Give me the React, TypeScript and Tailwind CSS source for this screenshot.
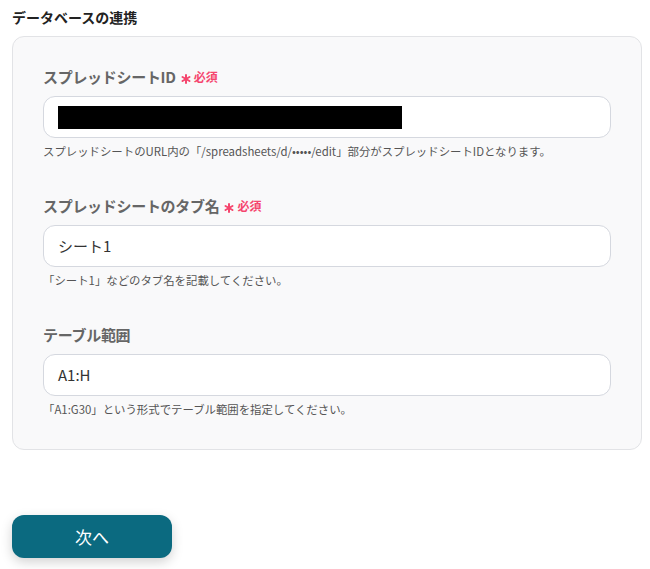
import React from 'react'

interface Field {
  label: string
  required?: boolean
  value?: string
  redacted?: boolean
  help: string
}

const fields: Field[] = [
  {
    label: 'スプレッドシートID',
    required: true,
    redacted: true,
    help: 'スプレッドシートのURL内の「/spreadsheets/d/•••••/edit」部分がスプレッドシートIDとなります。',
  },
  {
    label: 'スプレッドシートのタブ名',
    required: true,
    value: 'シート1',
    help: '「シート1」などのタブ名を記載してください。',
  },
  {
    label: 'テーブル範囲',
    value: 'A1:H',
    help: '「A1:G30」という形式でテーブル範囲を指定してください。',
  },
]

function Asterisk() {
  return (
    <svg width="10" height="10" viewBox="0 0 10 10" className="mt-[4px]">
      <g stroke="#f5466e" strokeWidth="2" strokeLinecap="round">
        <line x1="5" y1="1" x2="5" y2="9" />
        <line x1="1.5" y1="3" x2="8.5" y2="7" />
        <line x1="1.5" y1="7" x2="8.5" y2="3" />
      </g>
    </svg>
  )
}

function FormField({ field }: { field: Field }) {
  return (
    <div className="flex flex-col">
      <div className="flex items-center gap-[5px] h-5">
        <span className="text-[15px] font-bold text-[#666] leading-5 tracking-[-0.3px]">{field.label}</span>
        {field.required && (
          <span className="flex items-center gap-[3px] h-5">
            <Asterisk />
            <span className="text-[12px] font-bold text-[#f5466e] leading-5">必須</span>
          </span>
        )}
      </div>
      <div className="mt-[9px] h-[42px] rounded-xl border border-[#d5d8df] bg-white flex items-center px-[14px]">
        {field.redacted ? (
          <div className="w-[344px] h-[23px] bg-black" />
        ) : (
          <span className="text-[15px] text-[#333] leading-5">{field.value}</span>
        )}
      </div>
      <p className="mt-[5px] h-4 text-[11.4px] text-[#555] leading-4">{field.help}</p>
    </div>
  )
}

export default function App() {
  return (
    <div
      className="min-h-screen bg-white px-3 pt-[7px]"
      style={{ fontFamily: '"Noto Sans CJK JP", "Noto Sans", sans-serif' }}
    >
      <h2 className="h-5 text-sm font-bold text-[#222] leading-5">データベースの連携</h2>

      {/* Settings card */}
      <div className="mt-[9px] w-[630px] rounded-xl border border-[#e2e3e6] bg-[#f9f9fa] pt-[30px] pb-[32px] px-[30px] flex flex-col gap-[37px]">
        {fields.map((f) => (
          <FormField key={f.label} field={f} />
        ))}
      </div>

      <button className="mt-[65px] w-[160px] h-[43px] rounded-xl bg-[#0b6a80] text-white text-[17px] shadow-[0_4px_12px_rgba(0,0,0,0.18)]">
        次へ
      </button>
    </div>
  )
}
